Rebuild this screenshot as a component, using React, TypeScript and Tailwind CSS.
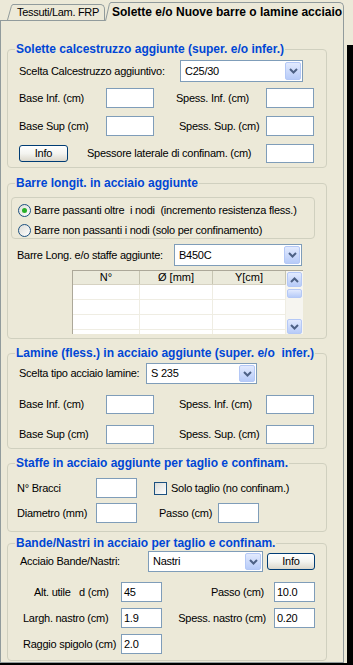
import React from 'react';

const Chevron = ({ up }: { up?: boolean }) => (
  <svg width="9" height="6" viewBox="0 0 9 6">
    <path d={up ? 'M1 5 L4.5 1.5 L8 5' : 'M1 1 L4.5 4.5 L8 1'} fill="none" stroke="#4D6185" strokeWidth="2" />
  </svg>
);

const BlueBtn = ({ className, children }: { className: string; children?: React.ReactNode }) => (
  <div className={`${className} rounded-[2px] border border-[#B4C8F6] bg-linear-to-b from-[#E2EAFE] to-[#B7CBF8] flex items-center justify-center`}>
    {children}
  </div>
);

const Combo = ({ className, value }: { className: string; value: string }) => (
  <div className={`${className} border border-[#7F9DB9] bg-white flex items-stretch`}>
    <span className="flex-1 pl-[4px] flex items-center">{value}</span>
    <BlueBtn className="w-[16px] m-[1px]">
      <Chevron />
    </BlueBtn>
  </div>
);

const Field = ({ className, value }: { className: string; value?: string }) => (
  <div className={`${className} border border-[#7F9DB9] bg-white flex items-center pl-[2px]`}>{value}</div>
);

const InfoButton = ({ className }: { className: string }) => (
  <div className={`${className} border border-[#003C74] rounded-[3px] bg-linear-to-b from-white via-[#F4F4F0] to-[#DCD8CC] flex items-center justify-center`}>
    Info
  </div>
);

const Radio = ({ checked }: { checked?: boolean }) => (
  <div className="w-[13px] h-[13px] rounded-full border border-[#1C5180] bg-linear-to-br from-[#DCDCD7] to-white flex items-center justify-center">
    {checked && <div className="w-[5px] h-[5px] rounded-full bg-[#29B029]" />}
  </div>
);

const Group = ({ title, className, children }: { title: string; className: string; children?: React.ReactNode }) => (
  <div className={`relative w-[320px] border border-[#D0D0BF] rounded-[4px] flex flex-col ${className}`}>
    <div className="absolute left-[7px] -top-[8px] px-[1px] bg-[#ECE9D8] text-[12px] font-bold text-[#0046D5] leading-[14px] tracking-normal whitespace-pre">
      {title}
    </div>
    {children}
  </div>
);

export default function App() {
  return (
    <div className="w-[353px] h-[665px] bg-black font-['Liberation_Sans',Arial,sans-serif] text-[11px] leading-[13px] tracking-[-0.25px] text-black">
      <div className="flex h-[663px]">
        <div className="w-[347px] h-full bg-[#ECE9D8] flex flex-col">
          {/* tab strip */}
          <div className="flex items-end h-[21px]">
            <div className="w-[7px] h-[1px] bg-[#919B9C]" />
            <div className="flex h-[17px] border-b border-[#919B9C]">
              <svg width="6" height="16" viewBox="0 0 6 16" className="block">
                <path d="M0.5 16 L4.3 2.5 Q5 0.5 6 0.5" fill="none" stroke="#919B9C" />
              </svg>
              <div className="w-[92px] border-t border-r border-[#919B9C] rounded-tr-[5px] pl-[4px] flex items-center tracking-[-0.3px]">
                Tessuti/Lam. FRP
              </div>
            </div>
            <div className="flex h-[19px] flex-1">
              <svg width="6" height="19" viewBox="0 0 6 19" className="block">
                <path d="M0.5 19 L4.3 2.5 Q5 0.5 6 0.5" fill="none" stroke="#919B9C" />
              </svg>
              <div className="flex-1 border-t border-r border-[#919B9C] rounded-tr-[5px] pl-[1px] flex items-center text-[12px] font-bold tracking-normal">
                Solette e/o Nuove barre o lamine acciaio
              </div>
            </div>
            <div className="w-[3px]" />
          </div>

          {/* tab body */}
          <div className="w-[344px] h-[642px] border-l border-r border-b border-[#919B9C] flex flex-col pl-[6px]">
            <Group title="Solette calcestruzzo aggiunte (super. e/o infer.)" className="mt-[28px] h-[119px]">
              <div className="flex items-center h-[22px] mt-[10px] pl-[11px]">
                <span className="w-[161px]">Scelta Calcestruzzo aggiuntivo:</span>
                <Combo className="w-[123px] h-[22px]" value="C25/30" />
              </div>
              <div className="flex items-center h-[20px] mt-[6px] pl-[11px]">
                <span className="w-[87px]">Base Inf. (cm)</span>
                <Field className="w-[48px] h-[20px]" />
                <span className="w-[112px] pl-[22px]">Spess. Inf. (cm)</span>
                <Field className="w-[48px] h-[20px]" />
              </div>
              <div className="flex items-center h-[20px] mt-[8px] pl-[11px]">
                <span className="w-[87px]">Base Sup (cm)</span>
                <Field className="w-[48px] h-[20px]" />
                <span className="w-[112px] pl-[25px]">Spess. Sup. (cm)</span>
                <Field className="w-[48px] h-[20px]" />
              </div>
              <div className="flex items-center h-[20px] mt-[7px] pl-[11px]">
                <InfoButton className="w-[49px] h-[17px]" />
                <span className="w-[198px] pl-[19px]">Spessore laterale di confinam. (cm)</span>
                <Field className="w-[48px] h-[19px]" />
              </div>
            </Group>

            <Group title="Barre longit. in acciaio aggiunte" className="mt-[15px] h-[156px]">
              <div className="mt-[13px] ml-[3px] w-[304px] h-[42px] border border-[#D0D0BF] rounded-[4px] flex flex-col">
                <div className="flex items-center gap-[3px] h-[16px] mt-[4px] pl-[6px]">
                  <Radio checked />
                  <span className="whitespace-pre">Barre passanti oltre  i nodi  (incremento resistenza fless.)</span>
                </div>
                <div className="flex items-center gap-[3px] h-[16px] mt-[4px] pl-[6px]">
                  <Radio />
                  <span className="whitespace-pre">Barre non passanti i nodi (solo per confinamento)</span>
                </div>
              </div>
              <div className="flex items-center h-[22px] mt-[5px] pl-[9px]">
                <span className="w-[157px]">Barre Long. e/o staffe aggiunte:</span>
                <Combo className="w-[128px] h-[22px]" value="B450C" />
              </div>
              <div className="ml-[64px] mt-[4px] w-[231px] h-[64px] border-l border-t border-[#ACA899] bg-white flex overflow-hidden">
                <div className="w-[213px] flex flex-col">
                  <div className="flex h-[15px] bg-[#EBEADB] border-b border-[#D6D2C2] tracking-normal">
                    <div className="w-[67px] border-r border-[#C7C5B2] flex items-center justify-center">N°</div>
                    <div className="w-[73px] border-r border-[#C7C5B2] flex items-center justify-center">Ø [mm]</div>
                    <div className="w-[73px] border-r border-[#C7C5B2] flex items-center justify-center">Y[cm]</div>
                  </div>
                  {[0, 1, 2, 3].map((r) => (
                    <div key={r} className="flex h-[15px] shrink-0 border-b border-[#EFEDE3]">
                      <div className="w-[67px] border-r border-[#EFEDE3]" />
                      <div className="w-[73px] border-r border-[#EFEDE3]" />
                      <div className="w-[73px] border-r border-[#EFEDE3]" />
                    </div>
                  ))}
                </div>
                <div className="w-[17px] bg-[#F6F5F0] flex flex-col pt-[1px] pl-[1px]">
                  <BlueBtn className="w-[15px] h-[15px]">
                    <Chevron up />
                  </BlueBtn>
                  <BlueBtn className="w-[15px] h-[9px] mt-[2px]" />
                  <BlueBtn className="w-[15px] h-[15px] mt-[21px]">
                    <Chevron />
                  </BlueBtn>
                </div>
              </div>
            </Group>

            <Group title="Lamine (fless.) in acciaio aggiunte (super. e/o  infer.)" className="mt-[14px] h-[96px]">
              <div className="flex items-center h-[21px] mt-[9px] pl-[11px]">
                <span className="w-[127px]">Scelta tipo acciaio lamine:</span>
                <Combo className="w-[111px] h-[21px]" value="S 235" />
              </div>
              <div className="flex items-center h-[19px] mt-[11px] pl-[11px]">
                <span className="w-[87px]">Base Inf. (cm)</span>
                <Field className="w-[48px] h-[19px]" />
                <span className="w-[112px] pl-[25px]">Spess. Inf. (cm)</span>
                <Field className="w-[48px] h-[19px]" />
              </div>
              <div className="flex items-center h-[19px] mt-[11px] pl-[11px]">
                <span className="w-[87px]">Base Sup (cm)</span>
                <Field className="w-[48px] h-[19px]" />
                <span className="w-[112px] pl-[25px]">Spess. Sup. (cm)</span>
                <Field className="w-[48px] h-[19px]" />
              </div>
            </Group>

            <Group title="Staffe in acciaio aggiunte per taglio e confinam." className="mt-[14px] h-[69px]">
              <div className="flex items-center h-[20px] mt-[14px] pl-[9px]">
                <span className="w-[79px]">N° Bracci</span>
                <Field className="w-[41px] h-[20px]" />
                <div className="ml-[17px] w-[13px] h-[13px] border border-[#1C5180] bg-linear-to-br from-[#DCDCD7] to-white" />
                <span className="ml-[4px]">Solo taglio (no confinam.)</span>
              </div>
              <div className="flex items-center h-[20px] mt-[5px] pl-[9px]">
                <span className="w-[79px]">Diametro (mm)</span>
                <Field className="w-[41px] h-[20px]" />
                <span className="w-[81px] pl-[22px]">Passo (cm)</span>
                <Field className="w-[41px] h-[20px]" />
              </div>
            </Group>

            <Group title="Bande/Nastri in acciaio per taglio e confinam." className="mt-[11px] h-[118px]">
              <div className="flex items-center h-[21px] mt-[7px] pl-[12px]">
                <span className="w-[128px]">Acciaio Bande/Nastri:</span>
                <Combo className="w-[115px] h-[21px]" value="Nastri" />
                <InfoButton className="ml-[4px] w-[48px] h-[17px]" />
              </div>
              <div className="flex items-center h-[20px] mt-[10px] pl-[26px]">
                <span className="w-[87px] whitespace-pre">Alt. utile   d (cm)</span>
                <Field className="w-[41px] h-[20px]" value="45" />
                <span className="w-[112px] text-right pr-[10px]">Passo (cm)</span>
                <Field className="w-[41px] h-[20px]" value="10.0" />
              </div>
              <div className="flex items-center h-[20px] mt-[6px] pl-[15px]">
                <span className="w-[98px]">Largh. nastro (cm)</span>
                <Field className="w-[41px] h-[20px]" value="1.9" />
                <span className="w-[112px] text-right pr-[8px]">Spess. nastro (cm)</span>
                <Field className="w-[41px] h-[20px]" value="0.20" />
              </div>
              <div className="flex items-center h-[20px] mt-[6px] pl-[15px]">
                <span className="w-[98px]">Raggio spigolo (cm)</span>
                <Field className="w-[41px] h-[20px]" value="2.0" />
              </div>
            </Group>
          </div>
        </div>
        <div className="w-[6px] flex flex-col">
          <div className="h-[45px] bg-[#ECE9D8]" />
        </div>
      </div>
    </div>
  );
}
